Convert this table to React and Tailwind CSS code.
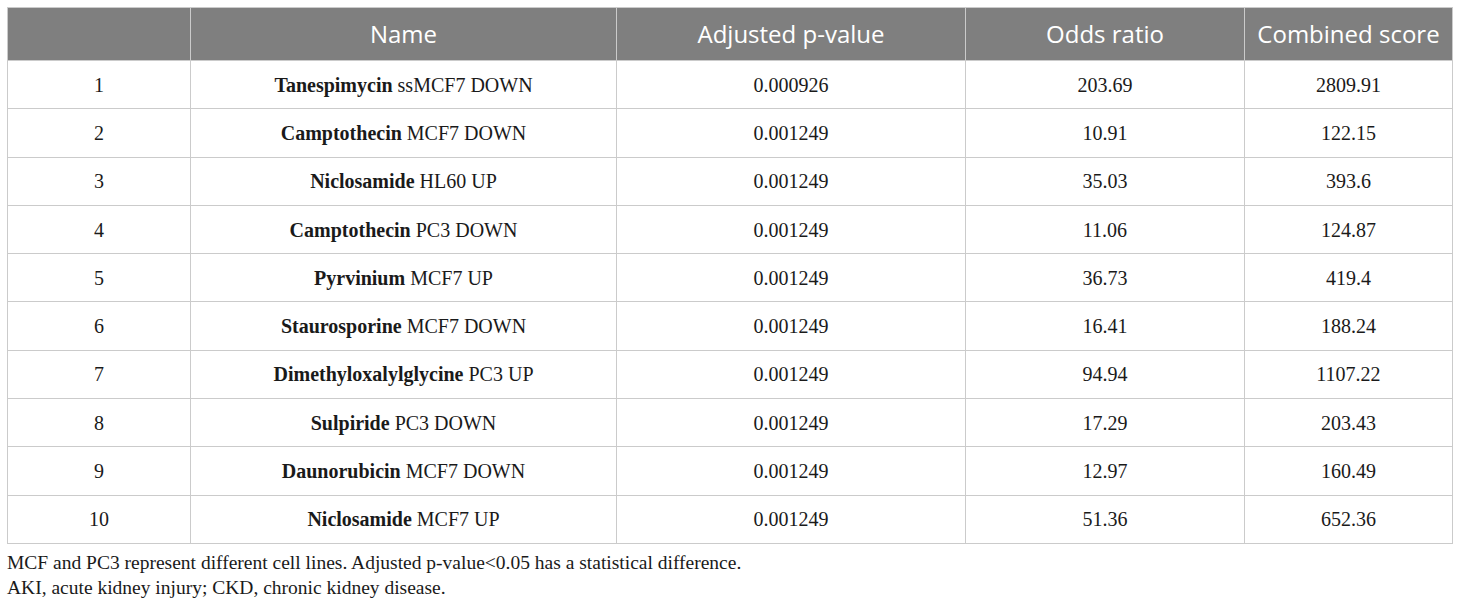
import React from 'react';

const rows = [
  ['1', 'Tanespimycin', 'ssMCF7 DOWN', '0.000926', '203.69', '2809.91'],
  ['2', 'Camptothecin', 'MCF7 DOWN', '0.001249', '10.91', '122.15'],
  ['3', 'Niclosamide', 'HL60 UP', '0.001249', '35.03', '393.6'],
  ['4', 'Camptothecin', 'PC3 DOWN', '0.001249', '11.06', '124.87'],
  ['5', 'Pyrvinium', 'MCF7 UP', '0.001249', '36.73', '419.4'],
  ['6', 'Staurosporine', 'MCF7 DOWN', '0.001249', '16.41', '188.24'],
  ['7', 'Dimethyloxalylglycine', 'PC3 UP', '0.001249', '94.94', '1107.22'],
  ['8', 'Sulpiride', 'PC3 DOWN', '0.001249', '17.29', '203.43'],
  ['9', 'Daunorubicin', 'MCF7 DOWN', '0.001249', '12.97', '160.49'],
  ['10', 'Niclosamide', 'MCF7 UP', '0.001249', '51.36', '652.36'],
];

const headers = ['', 'Name', 'Adjusted p-value', 'Odds ratio', 'Combined score'];
const widths = ['w-[183px]', 'w-[426px]', 'w-[349px]', 'w-[279px]', 'w-[208px]'];

export default function App() {
  return (
    <div className="bg-white px-[7px] pt-[7px] w-[1460px] h-[605px]">
      <table className="w-[1445px] border-collapse table-fixed">
        <thead>
          <tr className="bg-[#7f7f7f] h-[53px]">
            {headers.map((h, i) => (
              <th
                key={i}
                className={`${widths[i]} border border-[#cbcbcb] text-center text-white font-normal text-[24px] font-['Open_Sans',sans-serif]`}
              >
                {h}
              </th>
            ))}
          </tr>
        </thead>
        <tbody className="font-['Liberation_Serif',serif] text-[20px] text-[#1a1a1a]">
          {rows.map((r) => (
            <tr key={r[0]} className="h-[48.3px]">
              <td className="border border-[#cbcbcb] text-center">{r[0]}</td>
              <td className="border border-[#cbcbcb] text-center">
                <span className="font-bold">{r[1]}</span> {r[2]}
              </td>
              <td className="border border-[#cbcbcb] text-center">{r[3]}</td>
              <td className="border border-[#cbcbcb] text-center">{r[4]}</td>
              <td className="border border-[#cbcbcb] text-center">{r[5]}</td>
            </tr>
          ))}
        </tbody>
      </table>
      <div className="pt-[6px] font-['Liberation_Serif',serif] text-[19.5px] leading-[25px] text-[#1a1a1a]">
        <p>MCF and PC3 represent different cell lines. Adjusted p-value&lt;0.05 has a statistical difference.</p>
        <p>AKI, acute kidney injury; CKD, chronic kidney disease.</p>
      </div>
    </div>
  );
}
